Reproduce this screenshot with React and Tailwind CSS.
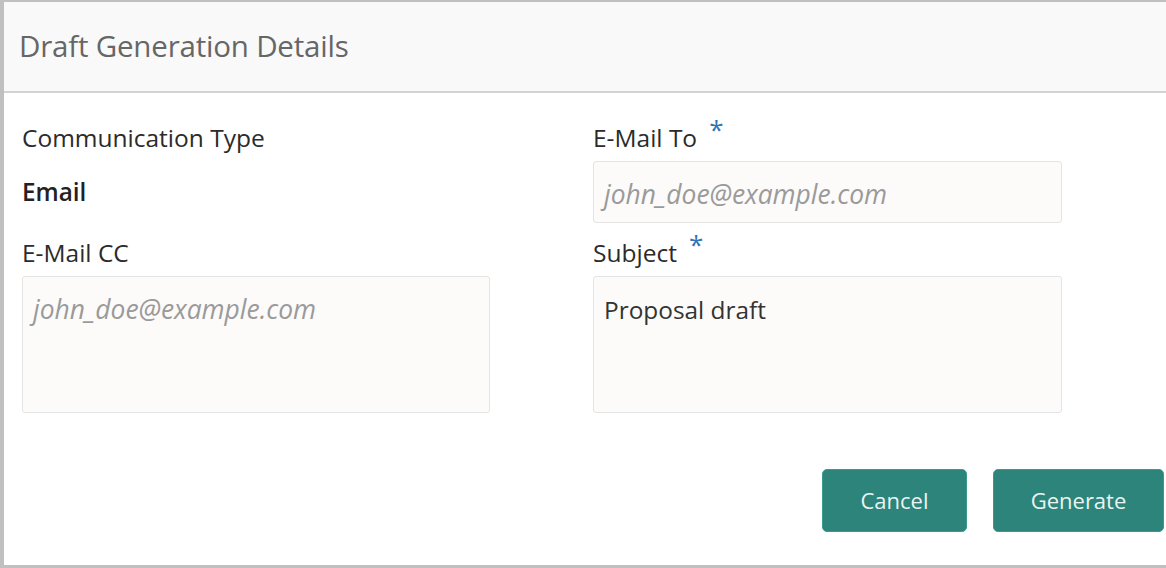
export default function App() {
  const font = { fontFamily: '"Open Sans", "Noto Sans", sans-serif' }
  return (
    <div className="w-[1166px] h-[568px] bg-white overflow-hidden" style={font}>
      <div className="h-full flex flex-col border-t-2 border-l-4 border-b-[3px] border-[#c0c0c0]">
        <div className="h-[91px] shrink-0 bg-[#f9f9f9] border-b-2 border-[#d2d2d2] flex items-center pl-[15px]">
          <h1 className="text-[29.5px] text-[#666666] tracking-[-0.2px]">Draft Generation Details</h1>
        </div>

        <div className="flex-1 flex flex-col pl-[18px] pt-[15px]">
          <div className="grid grid-cols-[468px_469px] gap-x-[103px]">
            <div className="flex flex-col">
              <Label>Communication Type</Label>
              <div className="h-[62px] flex items-center text-[24.3px] font-semibold text-[#222]">Email</div>
              <Label>E-Mail CC</Label>
              <Box placeholder="john_doe@example.com" tall />
            </div>
            <div className="flex flex-col">
              <Label required>E-Mail To</Label>
              <Box placeholder="john_doe@example.com" />
              <Label required>Subject</Label>
              <Box value="Proposal draft" tall />
            </div>
          </div>

          <div className="flex justify-end gap-[26px] mt-[56px] pr-[2px]">
            <button className="w-[145px] h-[63px] rounded-[5px] bg-[#2c847a] border border-[#3a9a8f] text-[22px] text-[#e9f4f2]">
              Cancel
            </button>
            <button className="w-[171px] h-[63px] rounded-[5px] bg-[#2c847a] border border-[#3a9a8f] text-[22px] text-[#e9f4f2]">
              Generate
            </button>
          </div>
        </div>
      </div>
    </div>
  )
}

function Label({ children, required }) {
  return (
    <div className="h-[53px] flex items-end pb-[7px]">
      <span className="text-[24.5px] leading-[32px] text-[#2b2b2b]">{children}</span>
      {required && (
        <span className="ml-[12px] self-start mt-[8px] text-[26px] leading-[26px] text-[#2f74b5]">*</span>
      )}
    </div>
  )
}

function Box({ placeholder, value, tall }) {
  return (
    <div
      className={`${tall ? 'h-[137px] items-start' : 'h-[62px] items-center pt-[6px]'} ${tall && value ? 'pt-[15px]' : ''} ${tall && !value ? 'pt-[13px]' : ''} flex px-[10px] bg-[#fcfbfa] border border-[#e4e4e4] rounded-[3px] text-[24.4px]`}
    >
      {value ? (
        <span className="text-[#333]">{value}</span>
      ) : (
        <span className="italic text-[#9a9a9a] text-[26.4px]">{placeholder}</span>
      )}
    </div>
  )
}
